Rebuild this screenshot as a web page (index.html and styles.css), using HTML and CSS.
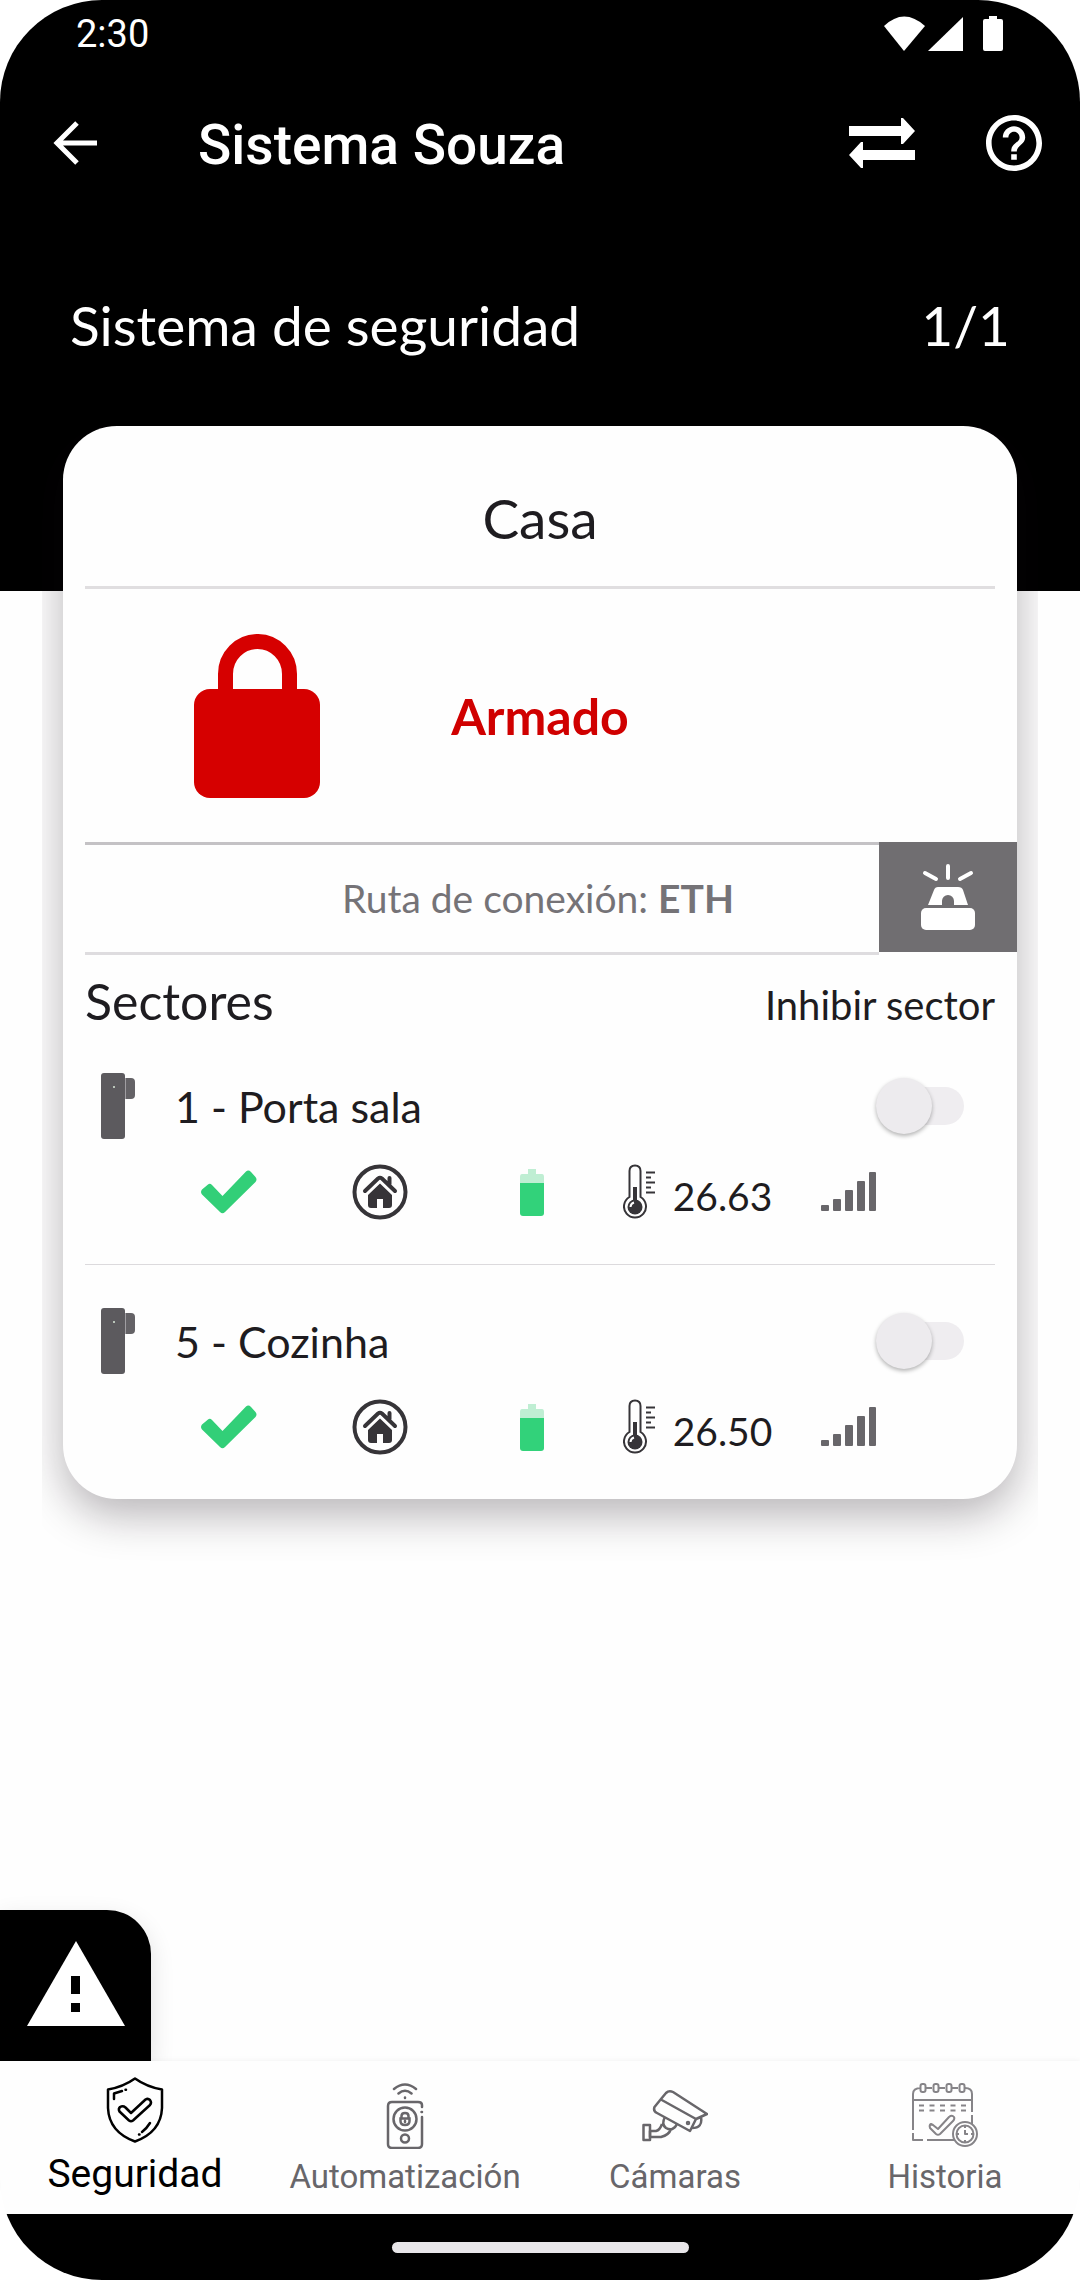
FILE: index.html
```html
<!DOCTYPE html>
<html lang="es">
<head>
  <meta charset="UTF-8" />
  <meta name="viewport" content="width=device-width, initial-scale=1.0"/>
  <title>Sistema Souza</title>
  <link rel="stylesheet" href="styles.css">
</head>
<body>
  <!-- shared icons for the sector rows -->
  <svg class="sprite" aria-hidden="true">
    <symbol id="icon-sensor" viewBox="0 0 34 66">
      <rect x="20" y="5" width="14" height="21" rx="4" fill="#646266"/>
      <rect width="24" height="66" rx="3" fill="#5c5a5e"/>
      <path d="M24.500 5V26" stroke="#a09ea2"/>
      <circle cx="13" cy="14" r="1" fill="#d8e8d8"/>
    </symbol>
    <symbol id="icon-check" viewBox="0 0 56 44">
      <path d="M1 24.500Q-1 22 1 19.500L7 14.500Q9 13 11 15L21.500 26L45 1.500Q47.500-.5 50 2L54.500 7Q56.500 9.500 54.500 12L24 42Q21.500 44.500 19 42Z" fill="#32cf78"/>
    </symbol>
    <symbol id="icon-home" viewBox="0 0 56 56">
      <circle cx="28" cy="28" r="25.500" fill="none" stroke="#363438" stroke-width="4"/>
      <path d="M13 27L26 14.500Q28 13 30 14.500L43 27M37.500 14V20" fill="none" stroke="#363438" stroke-width="4" stroke-linecap="round"/>
      <path d="M28 19.500L40 31V41Q40 44 37 44H31V35H25V44H19Q16 44 16 41V31Z" fill="#363438"/>
    </symbol>
    <symbol id="icon-battery" viewBox="0 0 24 47">
      <path d="M8 0H16V5H22Q24 5 24 8V14H0V8Q0 5 2 5H8Z" fill="#bfeed3"/>
      <path d="M0 14H24V44Q24 47 21 47H3Q0 47 0 44Z" fill="#32d27a"/>
    </symbol>
    <symbol id="icon-temp" viewBox="0 0 32 56">
      <path d="M6.500 33V7Q6.500 1.500 12 1.500T17.500 7V33A11 11 0 1 1 6.500 33Z" fill="none" stroke="#363438" stroke-width="2"/>
      <path d="M12 23V38" stroke="#363438" stroke-width="4"/>
      <circle cx="12" cy="43" r="7.500" fill="#363438"/>
      <path d="M7.500 43A5 5 0 0 1 11 38.500" fill="none" stroke="#fff" stroke-width="2"/>
      <path d="M23 8.500H32M23 13.500H28M23 18.500H32M23 23.500H28M23 28.500H32" stroke="#363438" stroke-width="2"/>
    </symbol>
    <symbol id="icon-signal" viewBox="0 0 56 40">
      <g fill="#68666a">
        <rect y="33" width="8" height="6" rx="1"/><rect x="12" y="27" width="8" height="12" rx="1"/>
        <rect x="24" y="18" width="8" height="21" rx="1"/><rect x="36" y="9" width="8" height="30" rx="1"/>
        <rect x="48" width="7" height="39" rx="1"/>
      </g>
    </symbol>
  </svg>

  <div class="phone">
    <header class="header">
      <div class="status-bar">
        <span>2:30</span>
        <svg width="120" height="36" viewBox="0 0 120 36" fill="#fff" aria-hidden="true">
          <path d="M20 35L0 10Q20-9 41 10Z"/>
          <path d="M44 35L79 1V35Z"/>
          <path d="M105 0H113V3H117Q119 3 119 5V33Q119 35 117 35H101Q99 35 99 33V5Q99 3 101 3H105Z"/>
        </svg>
      </div>
      <div class="toolbar">
        <button class="icon-btn back" type="button" aria-label="Volver">
          <svg width="44" height="44" viewBox="0 0 44 44" fill="none" stroke="#fff" stroke-width="5"><path d="M44 22H4M24 2L4 22L24 42"/></svg>
        </button>
        <h1 class="title">Sistema Souza</h1>
        <button class="icon-btn" type="button" aria-label="Cambiar sistema">
          <svg width="66" height="50" viewBox="0 0 66 50" fill="#fff"><path d="M0 8H52V0H54L66 13L54 26H52V18H0Z"/><path d="M66 32H14V24H12L0 37L12 50H14V42H66Z"/></svg>
        </button>
        <button class="icon-btn" type="button" aria-label="Ayuda">
          <svg width="56" height="56" viewBox="2 2 20 20" fill="#fff"><path d="M11 18h2v-2h-2v2zm1-16C6.480 2 2 6.480 2 12s4.480 10 10 10 10-4.480 10-10S17.520 2 12 2zm0 18c-4.410 0-8-3.590-8-8s3.590-8 8-8 8 3.590 8 8-3.590 8-8 8zm0-14c-2.210 0-4 1.790-4 4h2c0-1.100.9-2 2-2s2 .9 2 2c0 2-3 1.750-3 5h2c0-2.250 3-2.500 3-5 0-2.210-1.790-4-4-4z"/></svg>
        </button>
      </div>
      <div class="section-bar">
        <h2 class="section-title">Sistema de seguridad</h2>
        <span>1/1</span>
      </div>
    </header>

    <main class="content">
      <section class="card">
        <h3 class="card-title">Casa</h3>

        <div class="state">
          <svg width="126" height="164" viewBox="0 0 126 164" aria-hidden="true">
            <path d="M31.500 60V40A31.500 32 0 0 1 95.500 40V60" fill="none" stroke="#d60000" stroke-width="15"/>
            <rect y="55" width="126" height="109" rx="16" fill="#d60000"/>
          </svg>
          <strong class="state-text">Armado</strong>
        </div>

        <div class="route">
          <p class="route-text">Ruta de conexión: <b>ETH</b></p>
          <button class="siren" type="button" aria-label="Sirena">
            <svg width="54" height="66" viewBox="0 0 54 66" fill="#fff">
              <path d="M4 9L15 15M27 2V14M50 9L39 15" stroke="#fff" stroke-width="4" stroke-linecap="round"/>
              <path d="M13 26Q14 23 17 23H37Q41 23 42 26L47 41H33V37A6 6 0 0 0 21 37V41H7Z"/>
              <rect y="44" width="54" height="22" rx="5"/>
            </svg>
          </button>
        </div>

        <div class="sectors">
          <div class="sectors-head">
            <h4 class="sectors-title">Sectores</h4>
            <span class="sectors-action">Inhibir sector</span>
          </div>

          <article class="sector">
            <div class="sector-main">
              <svg width="34" height="66" aria-hidden="true"><use href="#icon-sensor"/></svg>
              <label class="sector-name" for="sector-1">1 - Porta sala</label>
              <input class="switch" id="sector-1" type="checkbox">
            </div>
            <div class="sector-status">
              <svg width="56" height="44"><use href="#icon-check"/></svg>
              <svg width="56" height="56"><use href="#icon-home"/></svg>
              <svg width="24" height="47"><use href="#icon-battery"/></svg>
              <span class="temp"><svg width="32" height="56"><use href="#icon-temp"/></svg><span class="temp-value">26.63</span></span>
              <svg width="56" height="40"><use href="#icon-signal"/></svg>
            </div>
          </article>

          <article class="sector">
            <div class="sector-main">
              <svg width="34" height="66" aria-hidden="true"><use href="#icon-sensor"/></svg>
              <label class="sector-name" for="sector-5">5 - Cozinha</label>
              <input class="switch" id="sector-5" type="checkbox">
            </div>
            <div class="sector-status">
              <svg width="56" height="44"><use href="#icon-check"/></svg>
              <svg width="56" height="56"><use href="#icon-home"/></svg>
              <svg width="24" height="47"><use href="#icon-battery"/></svg>
              <span class="temp"><svg width="32" height="56"><use href="#icon-temp"/></svg><span class="temp-value">26.50</span></span>
              <svg width="56" height="40"><use href="#icon-signal"/></svg>
            </div>
          </article>
        </div>
      </section>
    </main>

    <button class="alert" type="button" aria-label="Problemas">
      <svg width="98" height="85" viewBox="0 0 98 85"><path d="M49 0L98 85H0Z" fill="#fff"/><path d="M44 35H53V53H44ZM44 62H53V71H44Z"/></svg>
    </button>

    <nav class="tabs">
      <a class="tab active" href="#seguridad">
        <svg width="66" height="66" viewBox="0 0 66 66" fill="none" stroke="#000" stroke-width="2.500" stroke-linejoin="round" stroke-linecap="round">
          <path d="M33 1.500Q21 10 6 12.500V31Q7 55 33 64.500Q59 55 60 31V12.500Q45 10 33 1.500Z"/>
          <path d="M12 22V16.500L20 14M23.500 12.800H24M48 46Q45 51 40 55M37 57.500H37.500"/>
          <path d="M23.500 30.500L29 36L43.500 22.500Q46 21 48 23Q50 25.500 48 28L31 43.500Q29 45 27 43.500L17.500 34.500Q16 32 18 30Q21 28.500 23.500 30.500Z"/>
        </svg>
        <span>Seguridad</span>
      </a>
      <a class="tab" href="#automatizacion">
        <svg width="66" height="66" viewBox="0 0 66 66" fill="none" stroke="#68666a" stroke-width="2.500" stroke-linecap="round">
          <path d="M22 6Q33-3 44 6M26.500 10.500Q33 5 39.500 10.500M33 14.500V15"/>
          <path d="M50 24V22Q50 19 46 19H20Q16 19 16 23V61Q16 65 20 65H46Q50 65 50 61V34M49.500 29H50"/>
          <circle cx="33" cy="36" r="11.500"/><circle cx="33" cy="55.500" r="4"/>
          <path d="M29.500 35V33Q29.500 30 33 30T36.500 33V35M28.500 35.500H37.500V38Q37.500 42 33 42T28.500 38ZM33 38V39"/>
        </svg>
        <span>Automatización</span>
      </a>
      <a class="tab" href="#camaras">
        <svg width="66" height="66" viewBox="0 0 66 66" fill="none" stroke="#68666a" stroke-width="2.500" stroke-linejoin="round">
          <path d="M19 16L24 10Q27 7 31 9L65 31L54 36L18 16M19 16L12.500 24Q11 28 15 30L48 48L54 36M54 36L59 34Q61 45 50 45"/>
          <path d="M23 34Q19 41 24 45Q31 49 35 41M20 41Q18 47 14 48H8V54H19Q27 52 29 46"/>
          <path d="M1.500 42H8V57H1.500Z"/><circle cx="46" cy="40" r="1"/>
        </svg>
        <span>Cámaras</span>
      </a>
      <a class="tab" href="#historia">
        <svg width="66" height="66" viewBox="0 0 66 66" fill="none" stroke="#868488" stroke-width="2" stroke-linejoin="round">
          <path d="M9 5Q1 5 1 11V47M1 50V57H11M15 57H43M9 5H8M14 5H20M27 5H33M40 5H46M53 5Q60 5 60 11V29M60 32V41M1 17H60"/>
          <rect x="8.500" y="1" width="5" height="8" rx="2"/><rect x="21.500" y="1" width="5" height="8" rx="2"/>
          <rect x="34.500" y="1" width="5" height="8" rx="2"/><rect x="47.500" y="1" width="5" height="8" rx="2"/>
          <path d="M7 22.500H55M7 27.500H55" stroke-dasharray="5 5.500"/>
          <path d="M21 42L26 46L37 34Q40 31.500 42 34Q43 36 41 38L28 51Q26 52.500 24 51L18 45Q17 42 19 41Z"/>
          <circle cx="53" cy="51" r="12" fill="#fff"/><circle cx="53" cy="51" r="8.500"/>
          <path d="M53 43V45M53 57V59M45 51H47M59 51H61M53 47V51H56"/>
        </svg>
        <span>Historia</span>
      </a>
    </nav>

    <footer class="gesture-bar"><div class="pill"></div></footer>
  </div>
</body>
</html>
```
FILE: styles.css
```css
* {
  box-sizing: border-box;
}
body {
  margin: 0;
  background: #fff;
  font-family: Lato, sans-serif;
  color: #1e1c20;
}
h1, h2, h3, h4, p {
  margin: 0;
  font-weight: 400;
}
button {
  border: 0;
  padding: 0;
  background: none;
}
svg {
  display: block;
  flex: none;
}
.sprite {
  position: absolute;
  width: 0;
  height: 0;
}

.phone {
  display: flex;
  flex-direction: column;
  min-height: 100vh;
  overflow: hidden;
  background: #fefefe;
  border-radius: 102px;
}

/* HEADER */
.header {
  background: #000;
  color: #fff;
  padding-bottom: 230px;
}
.status-bar {
  display: flex;
  justify-content: space-between;
  align-items: center;
  height: 68px;
  padding: 0 76px;
  font-family: Roboto, sans-serif;
  font-size: 38px;
}
.toolbar {
  display: flex;
  align-items: center;
  gap: 71px;
  height: 150px;
  padding: 0 38px 0 53px;
}
.back {
  margin-right: 30px;
}
.title {
  flex: 1;
  padding-top: 4px;
  font-family: Roboto, sans-serif;
  font-size: 55px;
  font-weight: 500;
}
.section-bar {
  display: flex;
  justify-content: space-between;
  align-items: center;
  height: 143px;
  padding: 70px 70px 0;
  font-size: 55px;
  line-height: 64px;
}
.section-title {
  font-size: 55px;
}

/* CARD */
.content {
  flex: 1;
  margin: -165px 42px 0;
  padding: 0 21px;
  overflow: hidden;  /* cuts the shadow at the pager edge */
}
.card {
  background: #fefefe;
  border-radius: 54px;
  box-shadow: 0 16px 44px rgba(20, 10, 20, 0.3);
}
.card-title {
  margin: 0 22px;
  padding: 60px 0 36px;
  border-bottom: 3px solid #e0dee0;
  text-align: center;
  font-size: 55px;
  line-height: 64px;
}
.state {
  display: grid;
  grid-template-columns: 1fr 1fr 1fr;
  align-items: center;
  height: 253px;
  padding: 0 22px;
}
.state svg {
  margin-left: 109px;
}
.state-text {
  text-align: center;
  font-size: 50px;
  color: #d00000;
}
.route {
  display: flex;
  height: 113px;
  margin-left: 22px;
  color: #757377;
}
.route-text {
  flex: 1;
  border-top: 3px solid #c4c2c5;
  border-bottom: 3px solid #dedcdf;
  padding-left: 112px;
  text-align: center;
  font-size: 39px;
  line-height: 106px;
}
.siren {
  display: flex;
  justify-content: center;
  align-items: center;
  width: 138px;
  height: 110px;
  background: #706e71;
}

/* SECTORS */
.sectors {
  padding: 0 22px;
}
.sectors-head {
  display: flex;
  justify-content: space-between;
  align-items: baseline;
  height: 93px;
  padding-top: 16px;
}
.sectors-title {
  font-size: 50px;
  line-height: 60px;
}
.sectors-action {
  font-size: 40px;
}
.sector {
  height: 235px;
  padding-top: 20px;
}
.sector + .sector {
  border-top: 1px solid #dcdadd;
  padding-top: 38px;
  margin-top: -19px;
}
.sector-main {
  display: flex;
  align-items: center;
  gap: 40px;
  height: 76px;
  padding: 0 31px 0 16px;
}
.sector-name {
  flex: 1;
  font-size: 43px;
}
.switch {
  appearance: none;
  display: flex;
  align-items: center;
  width: 88px;
  height: 38px;
  margin: 0;
  border-radius: 19px;
  background: #efedf0;
}
.switch::before {
  content: "";
  width: 56px;
  height: 56px;
  border-radius: 50%;
  background: #edebee;
  box-shadow: 0 2px 4px rgba(0, 0, 0, 0.3);
}
.switch:checked::before {
  margin-left: auto;
}
.sector-status {
  display: grid;
  grid-template-columns: repeat(3, 1fr) 166px 1fr;
  align-items: center;
  justify-items: center;
  height: 96px;
  padding: 0 70px 0 68px;
}
.temp {
  display: flex;
  align-items: center;
  gap: 18px;
  padding-left: 14px;
  font-size: 39px;
}
.temp-value {
  padding-top: 8px;
}

/* BOTTOM */
.alert {
  display: flex;
  justify-content: center;
  align-items: center;
  width: 151px;
  height: 151px;
  background: #000;
  border-top-right-radius: 44px;
  box-shadow: 0 8px 24px rgba(0, 0, 0, 0.12);
}
.alert svg {
  margin-bottom: 4px;
}
.tabs {
  display: grid;
  grid-template-columns: repeat(4, 1fr);
  height: 153px;
  background: #fefefe;
  box-shadow: 0 0 6px rgba(0, 0, 0, 0.06);
  z-index: 1;
}
.tab {
  display: flex;
  flex-direction: column;
  align-items: center;
  padding-top: 22px;
  font-family: Roboto, sans-serif;
  font-size: 33px;
  line-height: 56px;
  color: #68666a;
  text-decoration: none;
}
.tab.active {
  padding-top: 16px;
  gap: 3px;
  color: #000;
  font-size: 39px;
}
.gesture-bar {
  display: flex;
  justify-content: center;
  align-items: center;
  height: 66px;
  background: #000;
}
.pill {
  width: 297px;
  height: 11px;
  border-radius: 6px;
  background: #e8e6e9;
}
```
